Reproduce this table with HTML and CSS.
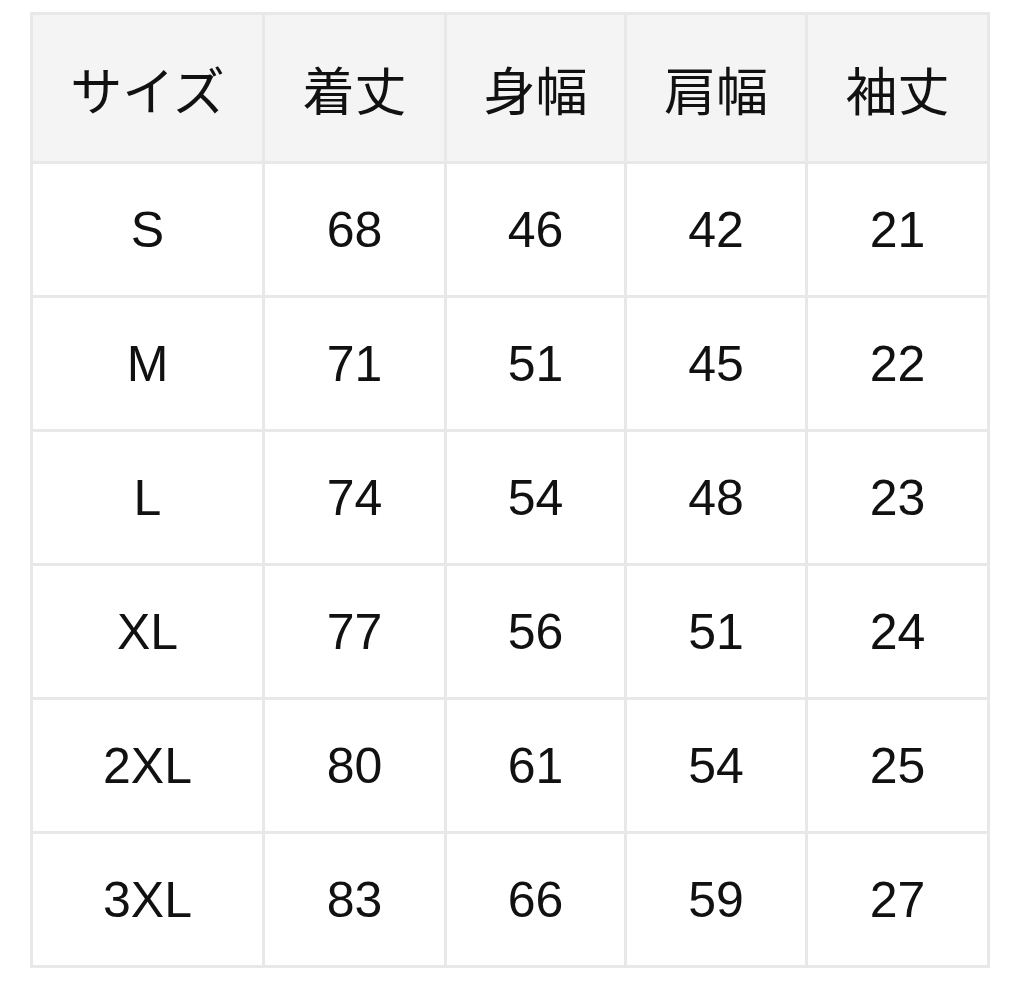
FILE: index.html
```html
<!DOCTYPE html>
<html lang="ja">
<head>
<meta charset="utf-8">
<title>サイズ表</title>
<link rel="stylesheet" href="styles.css">
</head>
<body>
<div class="wrap">
<table class="size-table">
<colgroup>
<col class="c1"><col class="c2"><col class="c3"><col class="c4"><col class="c5">
</colgroup>
<thead>
<tr><th>サイズ</th><th>着丈</th><th>身幅</th><th>肩幅</th><th>袖丈</th></tr>
</thead>
<tbody>
<tr><td>S</td><td>68</td><td>46</td><td>42</td><td>21</td></tr>
<tr><td>M</td><td>71</td><td>51</td><td>45</td><td>22</td></tr>
<tr><td>L</td><td>74</td><td>54</td><td>48</td><td>23</td></tr>
<tr><td>XL</td><td>77</td><td>56</td><td>51</td><td>24</td></tr>
<tr><td>2XL</td><td>80</td><td>61</td><td>54</td><td>25</td></tr>
<tr><td>3XL</td><td>83</td><td>66</td><td>59</td><td>27</td></tr>
</tbody>
</table>
</div>
</body>
</html>
```
FILE: styles.css
```css
html, body {
  margin: 0;
  padding: 0;
  background: #ffffff;
}
.wrap {
  padding: 12px 0 0 30px;
}
.size-table {
  border-collapse: collapse;
  table-layout: fixed;
  width: 957px;
  font-family: "Liberation Sans", "Noto Sans CJK JP", sans-serif;
  font-size: 50px;
  color: #111111;
}
.c1 { width: 232px; }
.c2 { width: 182px; }
.c3 { width: 180px; }
.c4 { width: 181px; }
.c5 { width: 182px; }
.size-table th,
.size-table td {
  border: 3px solid #e8e8e8;
  text-align: center;
  vertical-align: middle;
  padding: 0;
  font-weight: normal;
}
.size-table th {
  background: #f4f4f4;
  height: 146px;
  font-family: "Noto Sans CJK JP", sans-serif;
  font-size: 52px;
}
.size-table td {
  height: 131px;
}
```
